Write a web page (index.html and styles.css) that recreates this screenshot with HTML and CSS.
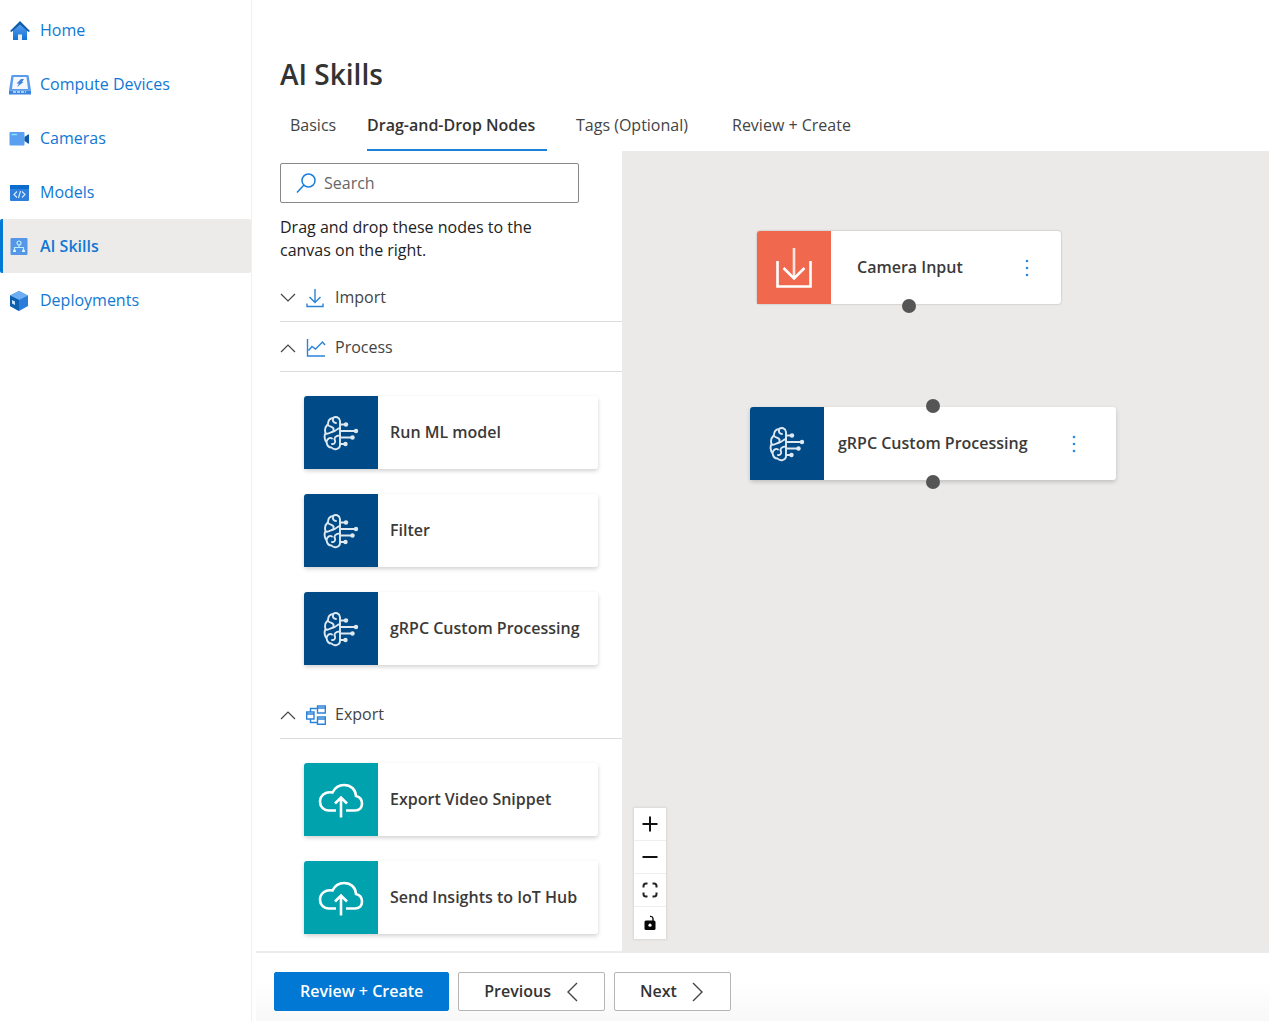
FILE: index.html
```html
<!DOCTYPE html>
<html lang="en">
<head>
<meta charset="utf-8">
<title>AI Skills</title>
<link rel="stylesheet" href="styles.css">
</head>
<body>
<svg class="sprite" aria-hidden="true">
  <symbol id="brain" viewBox="0 0 36 36">
    <g fill="none" stroke="#dfe9f2" stroke-width="1.900" stroke-linecap="round" stroke-linejoin="round">
      <path d="M17 6C16.500 2 12.500 1 10 3C7 3.500 5 6 5 9C2.500 11.500 1.500 15 2.500 18C1 21 1.500 25 3.500 27C4 30.500 6 32.500 8.500 32.500C11 35.500 16.500 34.500 17 30.500Z"/>
      <path d="M10 4C9.500 6.500 11 8 13 8M5 10C6.500 12 9.500 11.500 10.500 13.500V16M17 13C14 13.500 13 16 10.500 16.500C7 17 6 19.500 3 18.500M3.500 26.500C4.500 23.500 7 22 9 23.500M17 20.500C12.500 20.500 10.500 23 12 25.500C13 28 10.500 29.500 9 29"/>
      <path d="M18 9.500H22M18 16H33M18 22.500H29M18 29H22"/>
    </g>
    <g fill="#dfe9f2"><circle cx="23" cy="9.500" r="2.200"/><circle cx="33" cy="16" r="2.200"/><circle cx="29.500" cy="22.500" r="2.200"/><circle cx="22.500" cy="29" r="2.200"/></g>
  </symbol>
  <symbol id="cloud" viewBox="0 0 46 36">
    <g fill="none" stroke="#fff" stroke-width="2.600">
      <path d="M18 28.500H11C5.500 28.500 2 24.500 2 19.500C2 13.500 7.500 9 14.500 10.500C17 5.500 21 3 26 3C33 3 37.500 7.500 38 14C42 15 44 18 44 21.500C44 25.500 41.500 28.500 37 28.500H28"/>
      <path d="M23 35.500V16.500M17 21.500L23 15.500L29 21.500"/>
    </g>
  </symbol>
  <symbol id="chevron-up" viewBox="0 0 16 16"><path d="M1 12L8 5L15 12" fill="none" stroke="#444" stroke-width="1.200"/></symbol>
  <symbol id="more" viewBox="0 0 20 20"><g fill="#2b8ae0"><circle cx="10" cy="3" r="1.300"/><circle cx="10" cy="10" r="1.300"/><circle cx="10" cy="17" r="1.300"/></g></symbol>
</svg>

<div class="app">
  <nav class="sidebar" aria-label="Main">
    <a class="nav-item" href="#home">
      <svg class="nav-icon" viewBox="0 0 22 22"><defs><linearGradient id="blue" x1="0" y1="0" x2="0" y2="1"><stop offset="0" stop-color="#5ea0ef"/><stop offset="1" stop-color="#1272d4"/></linearGradient></defs><path d="M4 9L11 3L18 9V20H4Z" fill="url(#blue)"/><path d="M11 1L1 11L2.500 12L11 4.500L19.500 12L21 11Z" fill="#0f5cab"/><path d="M9 20V14.500H13V20Z" fill="#eee"/></svg>
      <span>Home</span></a>
    <a class="nav-item" href="#devices">
      <svg class="nav-icon" viewBox="0 0 22 22"><path d="M3.500 1H18.500Q19.500 1 19.700 2L22 16.500H0L2.300 2Q2.500 1 3.500 1Z" fill="#5a9cec"/><path d="M4.500 3H17.500L19 15H3Z" fill="#f4f7fb"/><path d="M0 16.500H22V20.500H0Z" fill="#3c83dc"/><path d="M4 18H17" stroke="#a7cdf8" stroke-width="2" stroke-dasharray="3 1"/><path d="M12 5H15L13 8H14.500L8 13L10 9.500H7.500Z" fill="#3e83dc"/></svg>
      <span>Compute Devices</span></a>
    <a class="nav-item" href="#cameras">
      <svg class="nav-icon" viewBox="0 0 22 22"><rect x="0.500" y="4" width="15" height="13.500" rx="1" fill="#5b9ff0"/><path d="M2.500 6.500H8" stroke="#8be3fa" stroke-width="1.500"/><path d="M15.500 9L19 6.500Q20 6 20 7V15Q20 16 19 15.500L15.500 13Z" fill="#0f5aa6"/></svg>
      <span>Cameras</span></a>
    <a class="nav-item" href="#models">
      <svg class="nav-icon" viewBox="0 0 22 22"><rect x="1" y="3" width="19" height="16" rx="1" fill="#2f7fdc"/><rect x="1" y="3" width="19" height="4" fill="#0a6ccc"/><path d="M8 9.500L5 12.500L8 15.500M13 9.500L16 12.500L13 15.500M11.500 9L9.500 16" fill="none" stroke="#d5e8ff" stroke-width="1.200"/></svg>
      <span>Models</span></a>
    <a class="nav-item selected" href="#skills" aria-current="page">
      <svg class="nav-icon" viewBox="0 0 22 22"><rect x="1.500" y="3" width="17" height="17" rx="1" fill="#5596e8"/><g fill="none" stroke="#b9eefa" stroke-width="1.200"><circle cx="10" cy="8" r="2"/><path d="M10 10V12.500M5.500 15V12.500H14.500V15"/></g><path d="M4 17V15.500L5.500 14L7 15.500V17ZM13 17V15.500L14.500 14L16 15.500V17Z" fill="#d8f6ff"/></svg>
      <span>AI Skills</span></a>
    <a class="nav-item" href="#deployments">
      <svg class="nav-icon" viewBox="0 0 22 22"><path d="M10 1L19 5.500V16L10 21L1 16V5.500Z" fill="#2b7cd9"/><path d="M1 5.500L10 1L19 5.500L10 10Z" fill="#70aef4"/><path d="M1 5.500L10 10V21L1 16Z" fill="#0d5ead"/><path d="M3 10L6 11.500V15L3 13.500Z" fill="#c8e3ff"/></svg>
      <span>Deployments</span></a>
  </nav>

  <main class="main">
    <header class="page-header">
      <h1>AI Skills</h1>
      <div class="tabs" role="tablist">
        <button class="tab" role="tab">Basics</button>
        <button class="tab active" role="tab" aria-selected="true">Drag-and-Drop Nodes</button>
        <button class="tab" role="tab">Tags (Optional)</button>
        <button class="tab" role="tab">Review + Create</button>
      </div>
    </header>

    <div class="workspace">
      <aside class="palette">
        <label class="search">
          <svg width="20" height="20" viewBox="0 0 20 20"><g fill="none" stroke="#1a7fd9" stroke-width="1.500"><circle cx="12.500" cy="7.500" r="6.500"/><path d="M8 12L1 19.500"/></g></svg>
          <input type="search" placeholder="Search" aria-label="Search">
        </label>
        <p class="hint">Drag and drop these nodes to the canvas on the right.</p>

        <button class="group" aria-expanded="false">
          <svg class="chevron closed"><use href="#chevron-up"/></svg>
          <svg class="group-icon" viewBox="0 0 20 20"><path d="M9 1V14M3.500 9L9 14.500L14.500 9M1 15.500V18.500H17V15.500" fill="none" stroke="#2b83d8" stroke-width="1.400"/></svg>
          <span>Import</span>
        </button>

        <button class="group" aria-expanded="true">
          <svg class="chevron"><use href="#chevron-up"/></svg>
          <svg class="group-icon" viewBox="0 0 20 20"><path d="M1.500 1V18H19M2.500 12.500L6 8.500L9.500 11L16.500 4L19 7" fill="none" stroke="#2b83d8" stroke-width="1.400"/></svg>
          <span>Process</span>
        </button>
        <ul class="cards">
          <li class="card"><span class="tile process"><svg class="brain"><use href="#brain"/></svg></span><span class="card-label">Run ML model</span></li>
          <li class="card"><span class="tile process"><svg class="brain"><use href="#brain"/></svg></span><span class="card-label">Filter</span></li>
          <li class="card"><span class="tile process"><svg class="brain"><use href="#brain"/></svg></span><span class="card-label">gRPC Custom Processing</span></li>
        </ul>

        <button class="group" aria-expanded="true">
          <svg class="chevron"><use href="#chevron-up"/></svg>
          <svg class="group-icon" viewBox="0 0 20 20"><g fill="none" stroke="#2b83d8" stroke-width="1.400"><path d="M0.700 7H8V14H0.700ZM11.500 1H19.300V8H11.500ZM11.500 12H19.300V19.300H11.500ZM0.700 9H8M11.500 3H19.300M11.500 14H19.300M4.500 7V3.500H11.500M4.500 14V17.500H11.500"/></g></svg>
          <span>Export</span>
        </button>
        <ul class="cards">
          <li class="card"><span class="tile export"><svg class="cloud"><use href="#cloud"/></svg></span><span class="card-label">Export Video Snippet</span></li>
          <li class="card"><span class="tile export"><svg class="cloud"><use href="#cloud"/></svg></span><span class="card-label">Send Insights to IoT Hub</span></li>
        </ul>
      </aside>

      <section class="canvas" aria-label="Canvas">
        <div class="node camera-node">
          <span class="tile import"><svg width="38" height="42" viewBox="0 0 38 42"><g fill="none" stroke="#fff" stroke-width="2.600"><path d="M2.500 14V39.500H35.500V14"/><path d="M19 1V31" stroke="#fde4de"/><path d="M8.500 21L19 31.500L29.500 21"/></g></svg></span>
          <span class="node-label">Camera Input</span>
          <button class="more" aria-label="Camera Input options"><svg width="20" height="20"><use href="#more"/></svg></button>
          <span class="port out"></span>
        </div>
        <div class="node grpc-node">
          <span class="tile process"><svg class="brain"><use href="#brain"/></svg></span>
          <span class="node-label">gRPC Custom Processing</span>
          <button class="more" aria-label="gRPC Custom Processing options"><svg width="20" height="20"><use href="#more"/></svg></button>
          <span class="port in"></span>
          <span class="port out"></span>
        </div>
        <div class="controls">
          <button aria-label="Zoom in"><svg viewBox="0 0 16 16"><path d="M8 0.500V15.500M0.500 8H15.500" stroke="#111" stroke-width="2"/></svg></button>
          <button aria-label="Zoom out"><svg viewBox="0 0 16 16"><path d="M0.500 8H15.500" stroke="#111" stroke-width="2"/></svg></button>
          <button aria-label="Fit view"><svg viewBox="0 0 16 16"><path d="M1.500 5.500V4Q1.500 1.500 4 1.500H5.500M10.500 1.500H12Q14.500 1.500 14.500 4V5.500M14.500 10.500V12Q14.500 14.500 12 14.500H10.500M5.500 14.500H4Q1.500 14.500 1.500 12V10.500" fill="none" stroke="#222" stroke-width="2"/></svg></button>
          <button aria-label="Lock"><svg viewBox="0 0 16 16"><path d="M11 6V3.500Q10.500 1 8 1.500" fill="none" stroke="#111" stroke-width="1.400"/><rect x="2.500" y="5.500" width="11" height="9.500" rx="1.500" fill="#050505"/><circle cx="8" cy="10.200" r="1.600" fill="#fff"/></svg></button>
        </div>
      </section>
    </div>

    <footer class="actions">
      <button class="btn primary">Review + Create</button>
      <button class="btn">Previous <svg width="12" height="20" viewBox="0 0 12 20"><path d="M11 1L2 10L11 19" fill="none" stroke="#444" stroke-width="1.400"/></svg></button>
      <button class="btn">Next <svg width="12" height="20" viewBox="0 0 12 20"><path d="M1 1L10 10L1 19" fill="none" stroke="#444" stroke-width="1.400"/></svg></button>
    </footer>
  </main>
</div>
</body>
</html>
```

FILE: styles.css
```css
* { box-sizing: border-box; }

body {
  margin: 0;
  background: #fff;
  color: #333;
  font-family: "Open Sans", "Noto Sans", sans-serif;
  font-size: 16px;
  line-height: 23px;
}

button {
  padding: 0;
  border: 0;
  background: none;
  color: inherit;
  font: inherit;
  cursor: pointer;
}

svg { display: block; flex: none; }
.sprite { position: absolute; width: 0; height: 0; }

.app {
  display: flex;
  min-height: 100vh;
  padding: 0 5px 5px 0;
}

.sidebar {
  flex: none;
  width: 252px;
  padding-top: 3px;
  border-right: 1px solid #f0f0f0;
}

.nav-item {
  display: flex;
  align-items: center;
  gap: 9px;
  height: 54px;
  padding-top: 1px;
  padding-left: 9px;
  color: #1078d4;
  text-decoration: none;
}
.nav-item.selected {
  padding-top: 0;
  padding-left: 6px;
  border-left: 3px solid #0078d4;
  border-radius: 2px;
  background: #edebe9;
  font-weight: 600;
}
.nav-icon { width: 22px; height: 22px; }

.main {
  display: flex;
  flex: 1;
  flex-direction: column;
  min-width: 0;
}

.page-header { padding: 56px 28px 0; }
h1 {
  margin: 0;
  font-size: 28px;
  font-weight: 600;
  line-height: 36px;
}

.tabs {
  display: grid;
  grid-template-columns: 48px 180px 127px auto;
  justify-content: start;
  gap: 29px;
  margin-top: 8px;
  padding-left: 10px;
}
.tab {
  height: 51px;
  padding-top: 2px;
  border-bottom: 2px solid transparent;
  color: #444;
  text-align: left;
  white-space: nowrap;
}
.tab.active {
  border-color: #1a82d8;
  color: #333;
  font-weight: 600;
}

.workspace { display: flex; flex: 1; }

.palette {
  flex: none;
  width: 370px;
  padding: 12px 0 16px 28px;
}

.search {
  display: flex;
  align-items: center;
  gap: 8px;
  width: 299px;
  height: 40px;
  padding-left: 15px;
  border: 1px solid #8a8886;
  border-radius: 2px;
}
.search input {
  flex: 1;
  min-width: 0;
  padding: 0;
  border: 0;
  outline: 0;
  background: none;
  font: inherit;
}
.search input::placeholder { color: #666; }

.hint {
  width: 290px;
  margin: 13px 0 10px;
  color: #222;
}

.group {
  display: flex;
  align-items: center;
  width: 100%;
  height: 50px;
  padding-top: 2px;
  border-bottom: 1px solid #dcdcdc;
  color: #444;
}
.chevron { width: 16px; height: 16px; }
.chevron.closed { transform: rotate(180deg); }
.group-icon { width: 20px; height: 20px; margin: 0 9px 0 10px; }

.cards {
  display: grid;
  gap: 25px;
  margin: 0;
  padding: 24px 24px;
  list-style: none;
}
.cards:last-child { padding-bottom: 0; }

.card, .node {
  display: flex;
  align-items: center;
  height: 73px;
  border-radius: 3px;
  background: #fff;
  box-shadow: 0 2px 4px rgba(0, 0, 0, 0.18);
  color: #3b3a39;
  font-weight: 600;
}
.card-label { padding-left: 12px; white-space: nowrap; }

.tile {
  display: grid;
  flex: none;
  place-items: center;
  width: 74px;
  height: 100%;
  border-radius: 3px 0 0 0;
}
.tile.process { background: #004b87; }
.tile.export { background: #00a2ad; }
.tile.import { background: #f0694f; }
.brain { width: 36px; height: 36px; }
.cloud { width: 46px; height: 36px; }

.canvas {
  position: relative;
  flex: 1;
  background: #ebeae9;
}

.node { position: absolute; }
.camera-node {
  top: 80px;
  left: 135px;
  width: 304px;
  box-shadow: 0 0 2px rgba(0, 0, 0, 0.3);
}
.grpc-node { top: 256px; left: 128px; width: 366px; }
.node-label {
  flex: 1;
  white-space: nowrap;
}
.camera-node .more { margin-right: 24px; }
.grpc-node .more { margin-right: 32px; }
.camera-node .node-label { padding-left: 26px; }
.grpc-node .node-label { padding-left: 14px; }

.port {
  position: absolute;
  left: 50%;
  width: 14px;
  height: 14px;
  margin-left: -7px;
  border-radius: 50%;
  background: #555;
}
.port.in { top: -8px; }
.port.out { bottom: -9px; }

.controls {
  position: absolute;
  bottom: 12px;
  left: 12px;
  display: grid;
  gap: 1px;
  background: #eee;
  box-shadow: 0 0 2px 1px rgba(0, 0, 0, 0.08);
}
.controls button {
  display: grid;
  place-items: center;
  width: 32px;
  height: 32px;
  background: #fff;
}
.controls svg { width: 16px; height: 16px; }

.actions {
  display: flex;
  gap: 9px;
  margin-left: 4px;
  padding: 19px 18px 10px;
  border-top: 2px solid #ebebeb;
  background: linear-gradient(#fff 40%, #f8f8f8);
}
.btn {
  display: flex;
  align-items: center;
  gap: 15px;
  height: 39px;
  padding: 0 26px 0 25px;
  border: 1px solid #b5b5b5;
  border-radius: 2px;
  background: #fff;
  font-weight: 600;
}
.btn.primary {
  padding: 0 25px;
  border-color: #0078d4;
  background: #0078d4;
  color: #fff;
}
```
